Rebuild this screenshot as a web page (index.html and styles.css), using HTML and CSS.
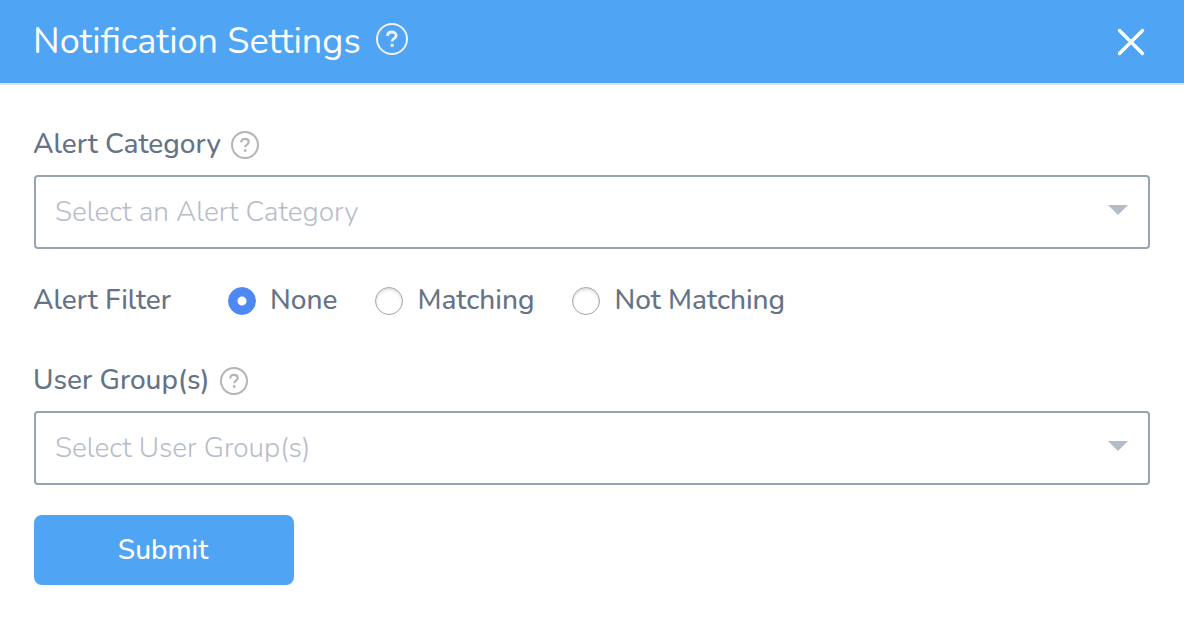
FILE: index.html
```html
<!DOCTYPE html>
<html lang="en">
<head>
<meta charset="utf-8">
<meta name="viewport" content="width=device-width, initial-scale=1">
<title>Notification Settings</title>
<link rel="stylesheet" href="styles.css">
</head>
<body>
<header class="dialog-header">
  <h1 class="title">Notification Settings</h1>
  <button class="icon-button title-help" type="button" aria-label="Help">
    <svg class="help-large" viewBox="0 0 32 32" fill="none" stroke="currentColor">
      <circle cx="16" cy="16" r="15" stroke-width="2"/>
      <path d="M11.600 13c0-2.800 1.900-4 4.300-4s4.300 1.400 4.300 3.600c0 2.900-4.100 2.800-4.100 5.900" stroke-width="2.800"/>
      <path d="M16.100 20.800v3" stroke-width="3"/>
    </svg>
  </button>
  <button class="icon-button close" type="button" aria-label="Close">
    <svg class="close-icon" viewBox="0 0 28 28" fill="none" stroke="currentColor" stroke-width="3.400" stroke-linecap="round">
      <path d="M2.500 2.500l23 23M25.500 2.500l-23 23"/>
    </svg>
  </button>
</header>
<main>
  <form class="form">
    <div class="field">
      <div class="label-row">
        <label class="label" for="category">Alert Category</label>
        <button class="icon-button field-help" type="button" aria-label="About alert categories">
          <svg class="help-small" viewBox="0 0 28 28" fill="none" stroke="currentColor">
            <circle cx="14" cy="14" r="13" stroke-width="2"/>
            <path d="M10.300 11.400c0-2.500 1.600-3.500 3.700-3.500s3.700 1.200 3.700 3.100c0 2.600-3.500 2.500-3.500 5.300" stroke-width="2.200"/>
            <path d="M14.200 18.200v2.600" stroke-width="2.400"/>
          </svg>
        </button>
      </div>
      <div class="select-box">
        <select class="select" id="category"><option>Select an Alert Category</option></select>
      </div>
    </div>
    <div class="filter" role="radiogroup" aria-labelledby="filter-label">
      <span class="label" id="filter-label">Alert Filter</span>
      <div class="options">
        <label class="option"><input class="radio" type="radio" name="filter" checked><span class="label">None</span></label>
        <label class="option"><input class="radio" type="radio" name="filter"><span class="label">Matching</span></label>
        <label class="option"><input class="radio" type="radio" name="filter"><span class="label">Not Matching</span></label>
      </div>
    </div>
    <div class="field">
      <div class="label-row">
        <label class="label" for="groups">User Group(s)</label>
        <button class="icon-button field-help" type="button" aria-label="About user groups">
          <svg class="help-small" viewBox="0 0 28 28" fill="none" stroke="currentColor">
            <circle cx="14" cy="14" r="13" stroke-width="2"/>
            <path d="M10.300 11.400c0-2.500 1.600-3.500 3.700-3.500s3.700 1.200 3.700 3.100c0 2.600-3.500 2.500-3.500 5.300" stroke-width="2.200"/>
            <path d="M14.200 18.200v2.600" stroke-width="2.400"/>
          </svg>
        </button>
      </div>
      <div class="select-box">
        <select class="select" id="groups"><option>Select User Group(s)</option></select>
      </div>
    </div>
    <button class="submit" type="submit">Submit</button>
  </form>
</main>
</body>
</html>
```
FILE: styles.css
```css
* {
  box-sizing: border-box;
}

body {
  margin: 0;
  background: #fff;
  color: #667387;
  font-family: Nunito, Lato, sans-serif;
  font-size: 28px;
}

button,
select {
  font: inherit;
}

.dialog-header {
  display: flex;
  align-items: center;
  padding: 17px 39px 16px 33px;
  border-bottom: 2px solid #dfe3e6;
  background: #4fa4f3;
  color: #fff;
}

.title {
  margin: 0;
  font-size: 36px;
  font-weight: 400;
  line-height: 50px;
}

.icon-button {
  display: flex;
  flex: none;
  padding: 0;
  border: 0;
  background: none;
  color: inherit;
}

.title-help {
  margin: 0 auto 6px 15px;
  color: #f0f1f2;
}

.help-large {
  width: 32px;
  height: 32px;
}

.close-icon {
  width: 28px;
  height: 28px;
}

.form {
  display: flex;
  flex-direction: column;
  padding: 39px 34px 38px;
}

.label-row {
  display: flex;
  align-items: center;
  gap: 10px;
  margin: 0 -1px 9px;
}

.label {
  padding-bottom: 2px;
  font-weight: 500;
  line-height: 40px;
}

.field-help {
  color: #b5b5b5;
}

.help-small {
  width: 28px;
  height: 28px;
}

.select-box {
  display: grid;
  align-items: center;
}

.select-box::after {
  content: "";
  grid-area: 1 / 1;
  justify-self: end;
  width: 20px;
  height: 10px;
  margin: 0 22px 4px;
  background: #b4bcc7;
  clip-path: polygon(0 0, 100% 0, 50% 100%);
  pointer-events: none;
}

.select {
  grid-area: 1 / 1;
  width: 100%;
  padding: 15px 50px 15px 19px;
  border: 2px solid #98a3b3;
  border-radius: 4px;
  background: #fff;
  color: #b6bdc9;
  font-weight: 350;
  line-height: 40px;
  appearance: none;
}

.filter {
  display: flex;
  align-items: center;
  gap: 57px;
  margin: 31px -1px 38px;
}

.options {
  display: flex;
  flex-wrap: wrap;
  gap: 38px;
}

.option {
  display: flex;
  align-items: center;
  gap: 14px;
}

.radio {
  width: 28px;
  height: 28px;
  margin: 0;
  border: 1px solid #a5a5a5;
  border-radius: 50%;
  background: #fff;
  box-shadow: inset 0 2px 3px #dedede;
  appearance: none;
}

.radio:checked {
  border-color: #4d88f5;
  background: radial-gradient(circle, #fff 4px, #4d88f5 5px);
  box-shadow: none;
}

.submit {
  align-self: flex-start;
  width: 260px;
  margin-top: 30px;
  padding: 15px 17px 15px 15px;
  border: 0;
  border-radius: 8px;
  background: #4fa4f3;
  color: #fff;
  font-weight: 500;
  line-height: 40px;
}
```
